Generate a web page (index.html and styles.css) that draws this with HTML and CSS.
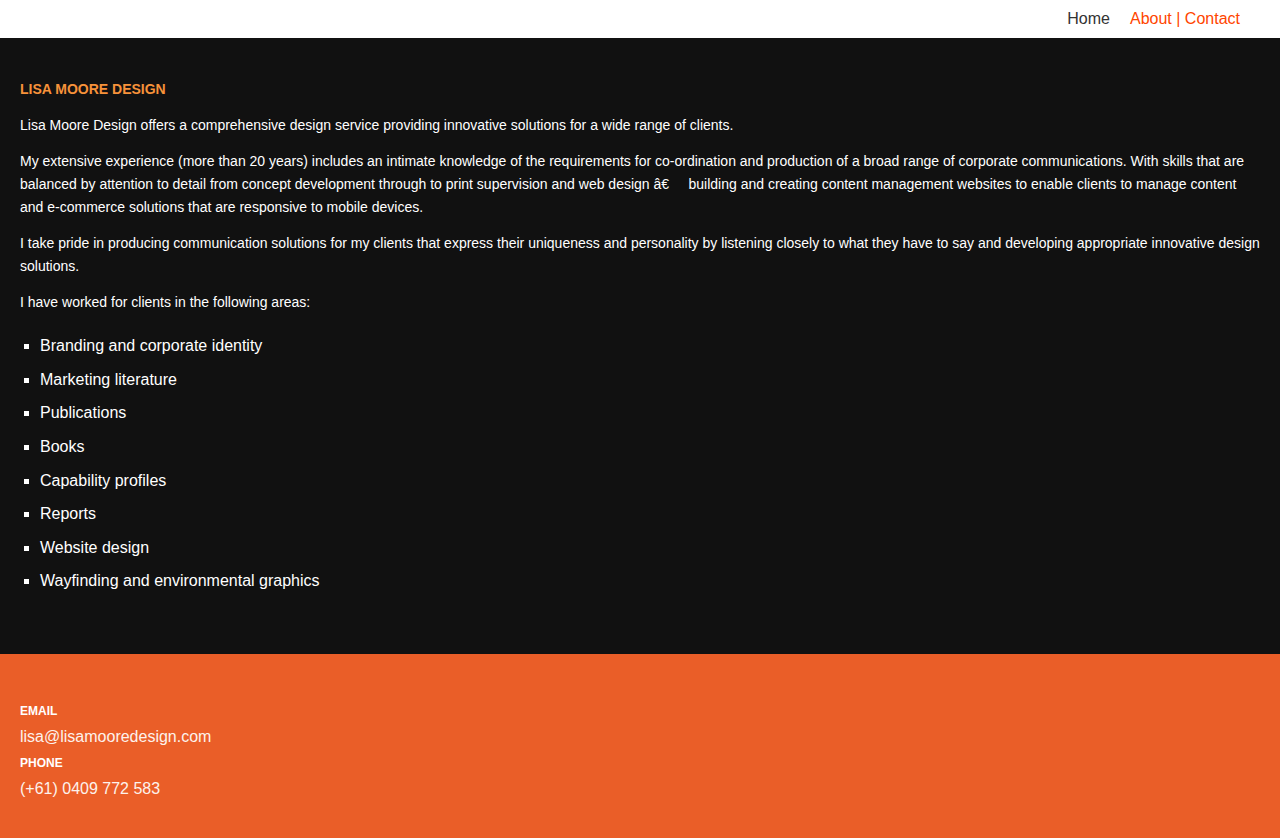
FILE: index.html
```html
<!DOCTYPE html>
<html lang="en">
<head>
<meta charset="utf-8">
<title>Lisa Moore Design</title>
<link rel="stylesheet" href="styles.css">
</head>
<body>
<header class="topbar">
  <nav class="nav">
    <a class="nav-link" href="#">Home</a>
    <a class="nav-link nav-link--active" href="#">About | Contact</a>
  </nav>
</header>
<main class="about">
  <h1 class="about-title">LISA MOORE DESIGN</h1>
  <p class="about-text">Lisa Moore Design offers a comprehensive design service providing innovative solutions for a wide range of clients.</p>
  <p class="about-text">My extensive experience (more than 20 years) includes an intimate knowledge of the requirements for co-ordination and production of a broad range of corporate communications. With skills that are balanced by attention to detail from concept development through to print supervision and web design â€&nbsp;&nbsp;&nbsp;&nbsp; building and creating content management websites to enable clients to manage content and e-commerce solutions that are responsive to mobile devices.</p>
  <p class="about-text">I take pride in producing communication solutions for my clients that express their uniqueness and personality by listening closely to what they have to say and developing appropriate innovative design solutions.</p>
  <p class="about-text">I have worked for clients in the following areas:</p>
  <ul class="areas">
    <li>Branding and corporate identity</li>
    <li>Marketing literature</li>
    <li>Publications</li>
    <li>Books</li>
    <li>Capability profiles</li>
    <li>Reports</li>
    <li>Website design</li>
    <li>Wayfinding and environmental graphics</li>
  </ul>
</main>
<footer class="contact">
  <div class="contact-label">EMAIL</div>
  <div class="contact-value">lisa@lisamooredesign.com</div>
  <div class="contact-label">PHONE</div>
  <div class="contact-value">(+61) 0409 772 583</div>
</footer>
</body>
</html>
```

FILE: styles.css
```css
* { box-sizing: border-box; }
html, body { margin: 0; padding: 0; }
body {
  font-family: "Liberation Sans", Arial, Helvetica, sans-serif;
  background: #111111;
  color: #ffffff;
}
.topbar {
  background: #ffffff;
  height: 38px;
  display: flex;
  justify-content: flex-end;
  align-items: center;
  padding-right: 40px;
}
.nav {
  display: flex;
  gap: 20px;
  align-items: center;
}
.nav-link {
  font-size: 16px;
  color: #333333;
  text-decoration: none;
  line-height: 20px;
}
.nav-link--active { color: #ff4500; }

.about {
  background: #111111;
  height: 616px;
  padding: 43px 20px 0 20px;
}
.about-title {
  margin: 0 0 16.5px;
  font-size: 14px;
  font-weight: bold;
  color: #f7923a;
  line-height: 16px;
}
.about-text {
  margin: 0 0 13px;
  font-size: 14px;
  line-height: 23px;
  color: #ffffff;
}
.areas {
  list-style: square;
  margin: 16px 0 0;
  padding-left: 20px;
  font-size: 16px;
}
.areas li {
  line-height: 24px;
  padding: 4.8px 0;
}

.contact {
  background: #ea5e28;
  height: 184px;
  padding: 49px 20px 0;
}
.contact-label {
  font-size: 12px;
  font-weight: bold;
  line-height: 16px;
  color: #ffffff;
}
.contact-value {
  font-size: 16px;
  line-height: 20px;
  margin: 8px 0;
  color: #fdf2ec;
}
```
